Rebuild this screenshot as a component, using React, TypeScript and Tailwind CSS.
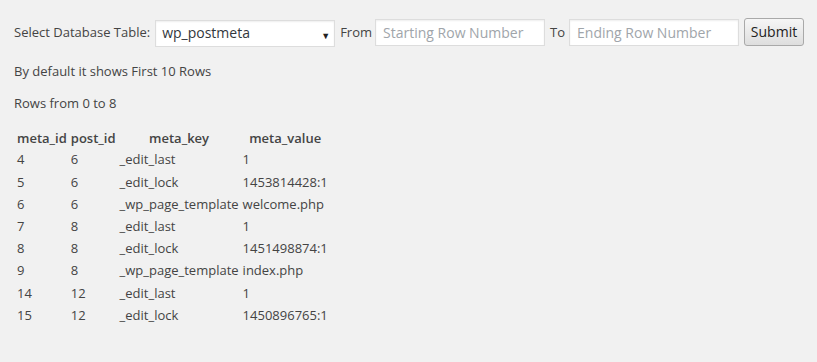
import React from "react";

const rows = [
  ["4", "6", "_edit_last", "1"],
  ["5", "6", "_edit_lock", "1453814428:1"],
  ["6", "6", "_wp_page_template", "welcome.php"],
  ["7", "8", "_edit_last", "1"],
  ["8", "8", "_edit_lock", "1451498874:1"],
  ["9", "8", "_wp_page_template", "index.php"],
  ["14", "12", "_edit_last", "1"],
  ["15", "12", "_edit_lock", "1450896765:1"],
];

export default function App() {
  return (
    <div
      className="min-h-[362px] w-full bg-[#f1f1f1] pl-[14px] pt-[17px] text-[13px] leading-[1.4em] text-[#444]"
      style={{ fontFamily: '"Open Sans", "Liberation Sans", sans-serif' }}
    >
      <div className="flex h-[30px] items-center">
        <span>Select Database Table:</span>
        <div className="relative ml-[5px] mt-[3px] h-[27px] w-[180px]">
          <select
            className="h-full w-full appearance-none border border-[#ddd] bg-white pl-[6px] text-[14px] text-[#32373c] shadow-[inset_0_1px_2px_rgba(0,0,0,0.07)] outline-none"
            style={{ fontFamily: '"Open Sans", "Liberation Sans", sans-serif' }}
            defaultValue="wp_postmeta"
          >
            <option value="wp_postmeta">wp_postmeta</option>
          </select>
          <span className="pointer-events-none absolute right-[5px] top-[7px] text-[9px] text-[#222]">▼</span>
        </div>
        <span className="ml-[5px]">From</span>
        <input
          className="ml-[3px] h-[27px] w-[170px] border border-[#ddd] bg-white px-[7px] text-[14px] text-[#32373c] shadow-[inset_0_1px_2px_rgba(0,0,0,0.07)] outline-none placeholder:text-[#a0a5aa]"
          style={{ fontFamily: '"Open Sans", "Liberation Sans", sans-serif' }}
          placeholder="Starting Row Number"
        />
        <span className="ml-[5px]">To</span>
        <input
          className="ml-[4px] h-[27px] w-[170px] border border-[#ddd] bg-white px-[7px] text-[14px] text-[#32373c] shadow-[inset_0_1px_2px_rgba(0,0,0,0.07)] outline-none placeholder:text-[#a0a5aa]"
          style={{ fontFamily: '"Open Sans", "Liberation Sans", sans-serif' }}
          placeholder="Ending Row Number"
        />
        <button
          className="ml-[5px] h-[28px] w-[60px] rounded-[3px] border border-[#a9a9a9] bg-gradient-to-b from-[#f6f6f6] to-[#dedede] text-[14px] text-[#222]"
          style={{ fontFamily: '"Open Sans", "Liberation Sans", sans-serif' }}
        >
          Submit
        </button>
      </div>
      <p className="mt-[15px]">By default it shows First 10 Rows</p>
      <p className="mt-[14px]">Rows from 0 to 8</p>
      <table className="mt-[15px] border-separate border-spacing-[2px]">
        <thead>
          <tr>
            {["meta_id", "post_id", "meta_key", "meta_value"].map((h) => (
              <th key={h} className="p-[1px] text-center font-semibold leading-[16px]">
                {h}
              </th>
            ))}
          </tr>
        </thead>
        <tbody>
          {rows.map((r, i) => (
            <tr key={i}>
              {r.map((c, j) => (
                <td key={j} className="p-[1px] text-left">
                  {c}
                </td>
              ))}
            </tr>
          ))}
        </tbody>
      </table>
    </div>
  );
}
